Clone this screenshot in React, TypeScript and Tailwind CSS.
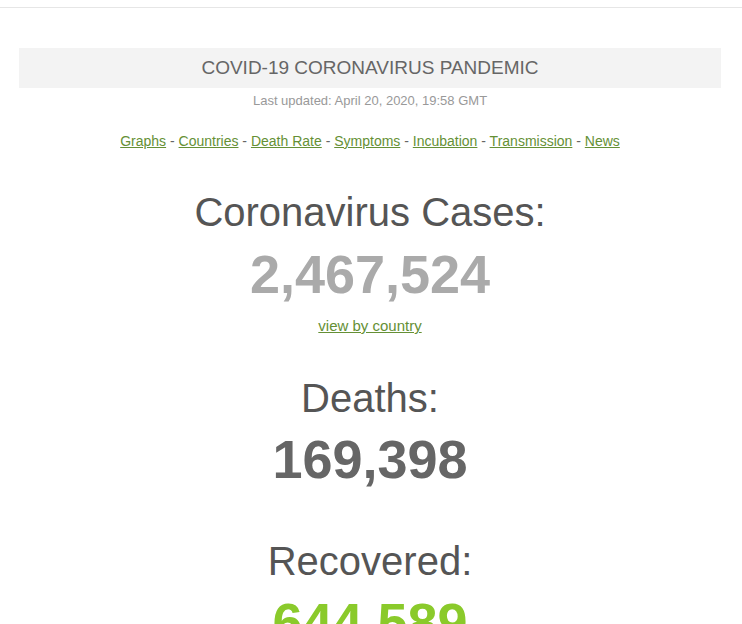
import React from 'react';

const links = ['Graphs', 'Countries', 'Death Rate', 'Symptoms', 'Incubation', 'Transmission', 'News'];

const App = () => {
  return (
    <div className="min-h-screen bg-white text-[#666] font-['Liberation_Sans',Arial,sans-serif]">
      <div className="h-[8px] border-b border-[#e6e6e6]" />

      <div className="pl-[19px] pr-[21px] pt-[40px] text-center">
        {/* Title bar */}
        <div className="h-[40px] bg-[#f3f3f3] flex items-center justify-center text-[19px] text-[#666]">
          COVID-19 CORONAVIRUS PANDEMIC
        </div>

        <div className="mt-[3px] text-[13px] leading-[20px] text-[#999]">
          Last updated: April 20, 2020, 19:58 GMT
        </div>

        <div className="mt-[20px] text-[14px] leading-[20px] text-[#666]">
          {links.map((l, i) => (
            <React.Fragment key={l}>
              <a href="#" className="text-[#659035] underline">{l}</a>
              {i < links.length - 1 && ' - '}
            </React.Fragment>
          ))}
        </div>

        {/* Counters */}
        <h1 className="mt-[41px] text-[40px] leading-none text-[#555]">Coronavirus Cases:</h1>
        <div className="mt-[15px] text-[54px] leading-none font-bold text-[#aaa]">2,467,524</div>
        <div className="mt-[15px] text-[15px] leading-[20px]">
          <a href="#" className="text-[#659035] underline">view by country</a>
        </div>

        <h1 className="mt-[42px] text-[40px] leading-none text-[#555]">Deaths:</h1>
        <div className="mt-[14px] text-[54px] leading-none font-bold text-[#666]">169,398</div>

        <h1 className="mt-[55px] text-[40px] leading-none text-[#555]">Recovered:</h1>
        <div className="mt-[14px] text-[54px] leading-none font-bold text-[#8aca2b]">644,589</div>
      </div>
    </div>
  );
};

export default App;
